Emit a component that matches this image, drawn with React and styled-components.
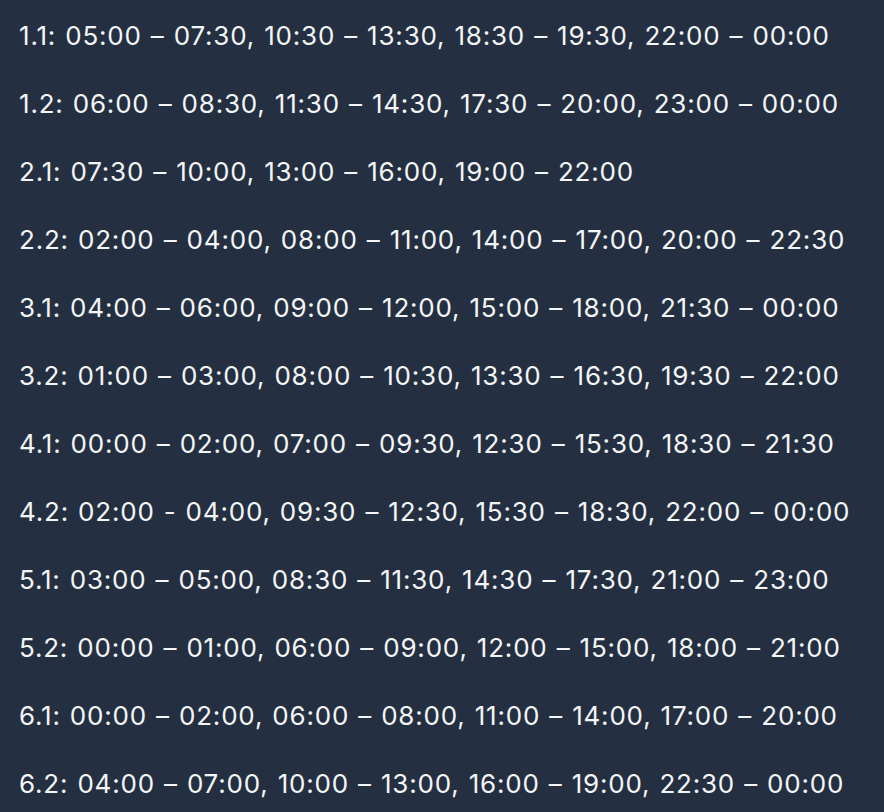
import React from 'react';
import styled, { createGlobalStyle } from 'styled-components';

const GlobalStyle = createGlobalStyle`
  html, body {
    margin: 0;
    padding: 0;
    background: #243041;
  }
`;

const List = styled.div`
  padding: 18px 19px 0;
  font-family: Inter, "Noto Sans", sans-serif;
  font-size: 26px;
  letter-spacing: 0.8px;
  word-spacing: 1px;
  color: #f4f5f7;
  display: flex;
  flex-direction: column;
  gap: 32px;
`;

const Row = styled.p`
  margin: 0;
  line-height: 36px;
  white-space: nowrap;
`;

const rows = [
  '1.1: 05:00 – 07:30, 10:30 – 13:30, 18:30 – 19:30, 22:00 – 00:00',
  '1.2: 06:00 – 08:30, 11:30 – 14:30, 17:30 – 20:00, 23:00 – 00:00',
  '2.1: 07:30 – 10:00, 13:00 – 16:00, 19:00 – 22:00',
  '2.2: 02:00 – 04:00, 08:00 – 11:00, 14:00 – 17:00, 20:00 – 22:30',
  '3.1: 04:00 – 06:00, 09:00 – 12:00, 15:00 – 18:00, 21:30 – 00:00',
  '3.2: 01:00 – 03:00, 08:00 – 10:30, 13:30 – 16:30, 19:30 – 22:00',
  '4.1: 00:00 – 02:00, 07:00 – 09:30, 12:30 – 15:30, 18:30 – 21:30',
  '4.2: 02:00 - 04:00, 09:30 – 12:30, 15:30 – 18:30, 22:00 – 00:00',
  '5.1: 03:00 – 05:00, 08:30 – 11:30, 14:30 – 17:30, 21:00 – 23:00',
  '5.2: 00:00 – 01:00, 06:00 – 09:00, 12:00 – 15:00, 18:00 – 21:00',
  '6.1: 00:00 – 02:00, 06:00 – 08:00, 11:00 – 14:00, 17:00 – 20:00',
  '6.2: 04:00 – 07:00, 10:00 – 13:00, 16:00 – 19:00, 22:30 – 00:00',
];

export default function App() {
  return (
    <>
      <GlobalStyle />
      <List>
        {rows.map((r) => (
          <Row key={r}>{r}</Row>
        ))}
      </List>
    </>
  );
}
